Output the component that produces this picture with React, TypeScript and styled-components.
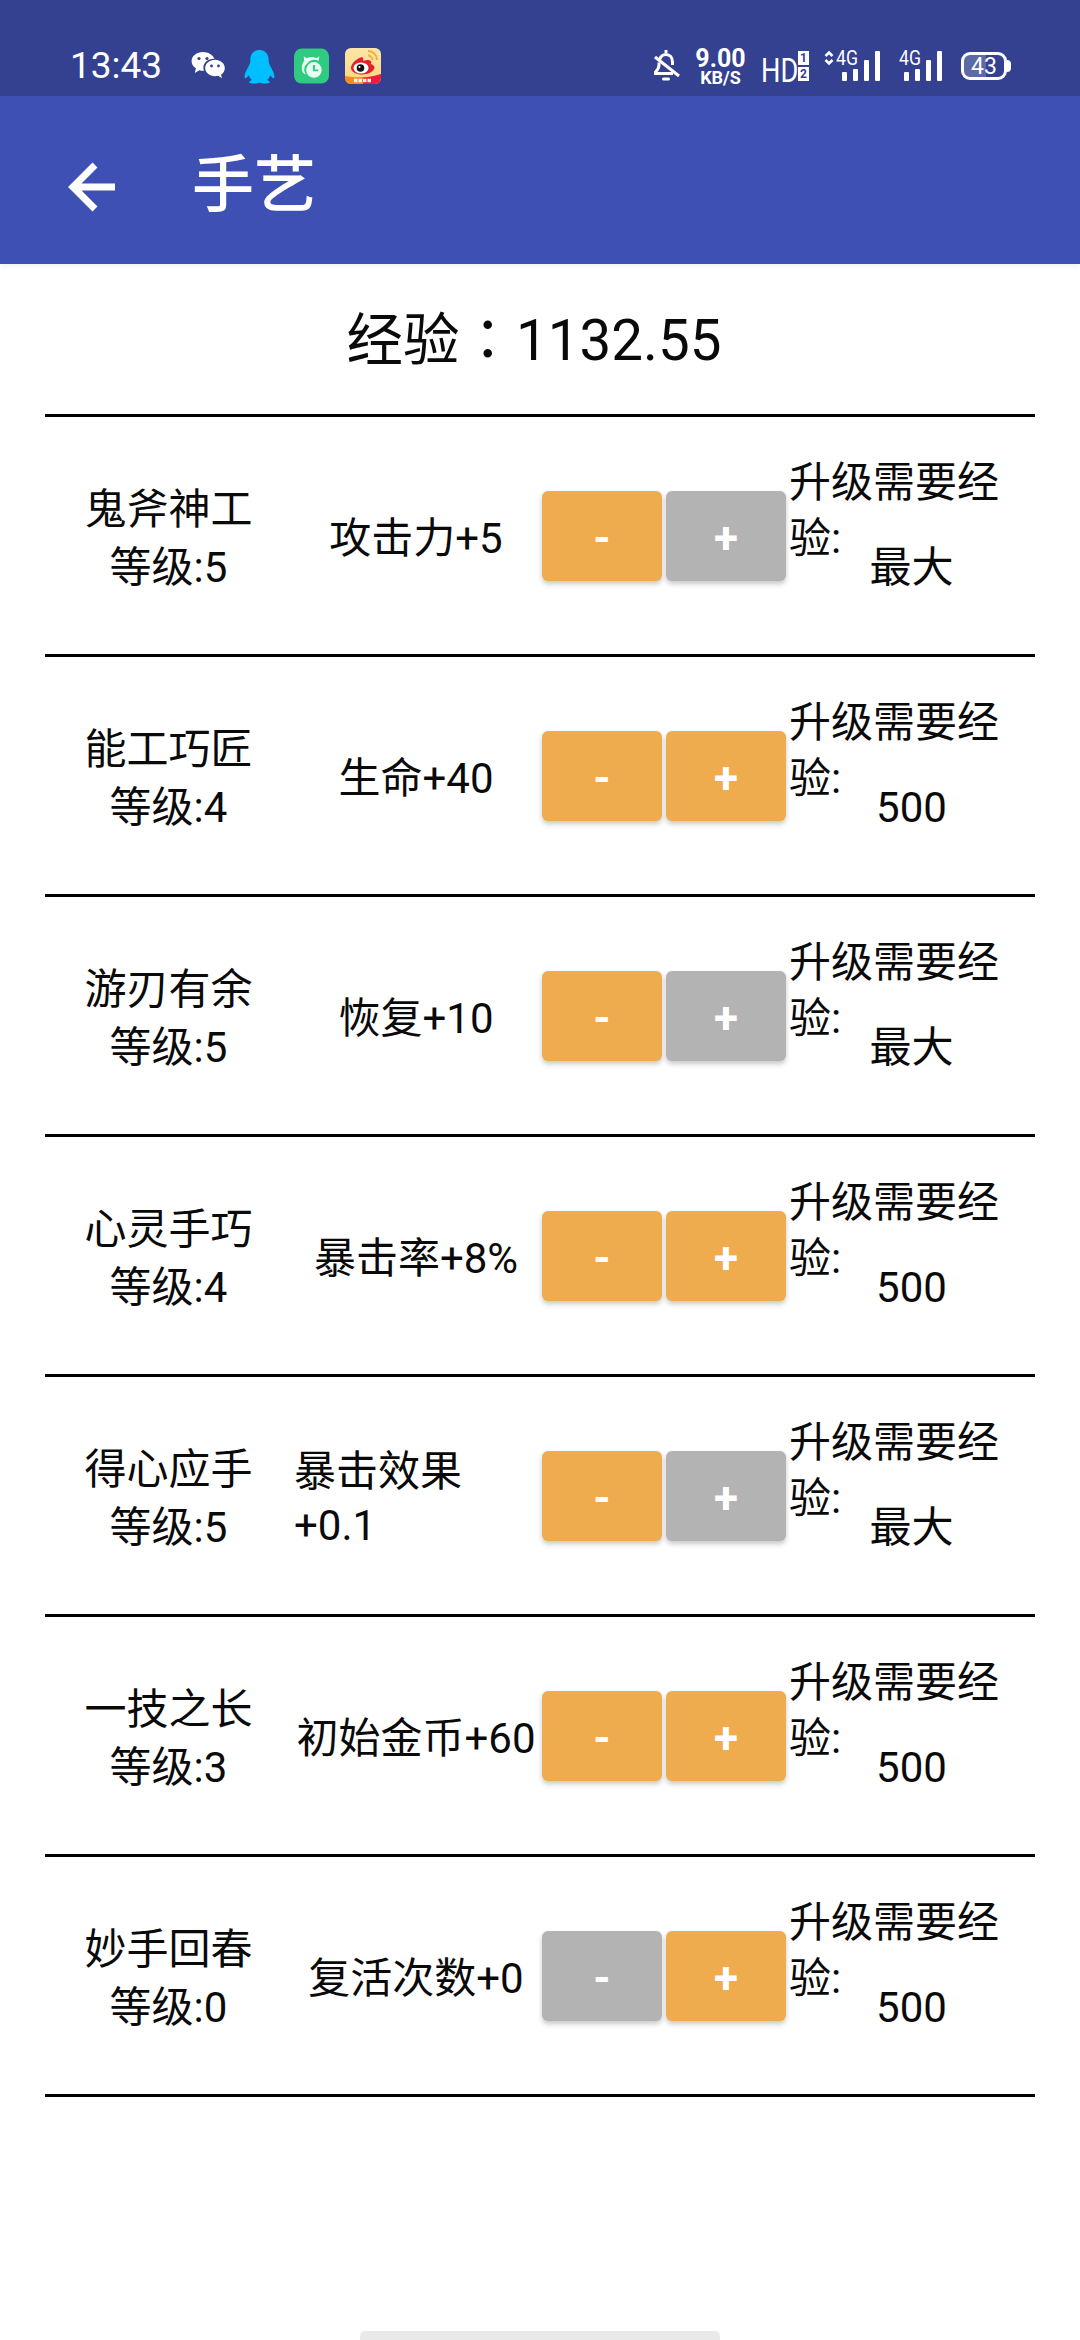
import React from 'react';
import styled, { createGlobalStyle } from 'styled-components';

const Global = createGlobalStyle`
  html, body { margin: 0; padding: 0; background: #fff; }
  body { font-family: Roboto, "Noto Sans CJK SC", sans-serif; color: #0a0a0a; }
`;

const Page = styled.div`
  position: relative;
  width: 1080px;
  height: 2340px;
  overflow: hidden;
  background: #fff;
`;

const StatusBar = styled.div`
  height: 96px;
  background: #334190;
  color: #fff;
  display: flex;
  align-items: flex-start;
  box-sizing: border-box;
  padding: 48px 0 0 70px;
`;

const Clock = styled.span`
  font-family: Roboto, sans-serif;
  font-weight: 400;
  font-size: 37px;
  line-height: 36px;
  width: 121px;
`;

const NotifIcons = styled.div`
  display: flex;
  align-items: center;
  gap: 19px;
  height: 36px;
`;

const WeiboMark = styled.svg`
  margin-left: -3px;
`;

const StatusRight = styled.div`
  margin-left: auto;
  margin-right: 73px;
  display: flex;
  align-items: flex-start;
  height: 40px;
`;

const Speed = styled.div`
  display: flex;
  flex-direction: column;
  align-items: center;
  width: 49px;
  margin: 0 16px 0 15px;
  font-family: Roboto, sans-serif;
  font-weight: 700;
`;

const SpeedValue = styled.span`
  font-size: 25px;
  line-height: 22px;
`;

const SpeedUnit = styled.span`
  font-size: 18px;
  line-height: 16px;
`;

const Hd = styled.span`
  display: block;
  width: 37px;
  font-family: Roboto, sans-serif;
  font-weight: 400;
  font-size: 34px;
  line-height: 34px;
  margin-top: 5px;
  white-space: nowrap;
  transform: scaleX(0.8);
  transform-origin: left center;
`;

const SimStack = styled.div`
  display: flex;
  flex-direction: column;
  gap: 2px;
  margin: 3px 15px 0 0;
`;

const SimBadge = styled.span`
  width: 11px;
  height: 14px;
  background: #fff;
  color: #334190;
  font-size: 12px;
  font-weight: 700;
  line-height: 14px;
  text-align: center;
`;

const Signal = styled.div<{ $wide?: boolean }>`
  position: relative;
  width: ${(p) => (p.$wide ? 56 : 43)}px;
  height: 33px;
  margin: 0 19px 0 0;
  display: flex;
  align-items: flex-end;
  justify-content: flex-end;
  gap: 6px;
`;

const Bar = styled.i<{ $h: number }>`
  display: block;
  width: 5px;
  height: ${(p) => p.$h}px;
  background: #fff;
  border-radius: 1px;
`;

const NetLabel = styled.span<{ $wide?: boolean }>`
  position: absolute;
  top: 0;
  left: ${(p) => (p.$wide ? 12 : 0)}px;
  font-family: Roboto, sans-serif;
  font-size: 21px;
  line-height: 20px;
  transform: scaleX(0.84);
  transform-origin: left center;
`;

const UpDown = styled.svg`
  position: absolute;
  left: 0;
  top: 2px;
`;

const Battery = styled.div`
  position: relative;
  width: 46px;
  height: 28px;
  margin-top: 4px;
  box-sizing: border-box;
  border: 3px solid #fff;
  border-radius: 9px;
  display: flex;
  align-items: center;
  justify-content: center;
  font-family: Roboto, sans-serif;
  font-size: 23px;
  font-weight: 400;
  background: linear-gradient(90deg, #5c6aa8 0 54%, transparent 54%);

  &::after {
    content: '';
    position: absolute;
    right: -7px;
    top: 5px;
    width: 4px;
    height: 12px;
    background: #fff;
    border-radius: 0 4px 4px 0;
  }
`;

const Toolbar = styled.div`
  position: relative;
  height: 168px;
  background: #3e50b4;
  color: #fff;
  display: flex;
  align-items: center;
  padding: 12px 0 0 60px;
  box-sizing: border-box;
  box-shadow: 0 3px 5px rgba(0, 0, 0, 0.05);
`;

const BackIcon = styled.svg`
  width: 60px;
  height: 60px;
  margin-right: 72px;
`;

const ToolbarTitle = styled.h1`
  margin: 0;
  font-size: 62px;
  font-weight: 500;
  line-height: 70px;
`;

const Content = styled.div`
  margin: 0 45px;
`;

const Experience = styled.div`
  height: 142px;
  padding: 0 12px 8px 0;
  display: flex;
  align-items: center;
  justify-content: center;
  font-family: Roboto, "Noto Sans CJK TC", sans-serif;
  font-size: 56.5px;
  border-bottom: 3px solid #000;
`;

const Row = styled.div`
  height: 237px;
  border-bottom: 3px solid #000;
  display: flex;
  align-items: center;
  font-size: 42px;
`;

const NameCell = styled.div`
  width: 247px;
  padding-top: 6px;
  text-align: center;
  line-height: 58px;
  flex: none;
`;

const EffectCell = styled.div`
  width: 248px;
  padding: 6px 2px 0;
  box-sizing: border-box;
  flex: none;
  text-align: center;
  line-height: 56px;
`;

const EffectWrapped = styled(EffectCell)`
  text-align: left;
  line-height: 54px;
`;

const Buttons = styled.div`
  display: flex;
  gap: 4px;
  margin-left: 2px;
  flex: none;
`;

const StepButton = styled.button<{ $on: boolean }>`
  width: 120px;
  height: 90px;
  padding: 5px 0 0;
  border: 0;
  border-radius: 6px;
  background: ${(p) => (p.$on ? '#efac4e' : '#b3b3b3')};
  color: #fff;
  font-family: Roboto, sans-serif;
  font-size: 44px;
  font-weight: 700;
  line-height: 1;
  box-shadow: 0 3px 5px rgba(0, 0, 0, 0.22);
`;

const NeedCell = styled.div`
  width: 245px;
  margin-left: 3px;
  padding-bottom: 20px;
  flex: none;
  display: flex;
  flex-direction: column;
  line-height: 56px;
`;

const NeedLabel = styled.div`
  width: 215px;
`;

const NeedValue = styled.div`
  text-align: center;
  margin-top: -27px;
`;

const HomeBar = styled.div`
  position: absolute;
  left: 360px;
  bottom: 0;
  width: 360px;
  height: 9px;
  background: #e9e9e9;
  border-radius: 5px 5px 0 0;
`;

const skills = [
  { name: '鬼斧神工', level: 5, effect: '攻击力+5', minus: true, plus: false, need: '最大' },
  { name: '能工巧匠', level: 4, effect: '生命+40', minus: true, plus: true, need: '500' },
  { name: '游刃有余', level: 5, effect: '恢复+10', minus: true, plus: false, need: '最大' },
  { name: '心灵手巧', level: 4, effect: '暴击率+8%', minus: true, plus: true, need: '500' },
  { name: '得心应手', level: 5, effect: '暴击效果+0.1', minus: true, plus: false, need: '最大', wrap: true },
  { name: '一技之长', level: 3, effect: '初始金币+60', minus: true, plus: true, need: '500' },
  { name: '妙手回春', level: 0, effect: '复活次数+0', minus: false, plus: true, need: '500' },
];

const WeChat = () => (
  <svg width="34" height="30" viewBox="0 0 34 30">
    <path fill="#fff" d="M12 1C5.600 1 .6 5 .6 10.200c0 3 1.700 5.400 4.300 7.100L3.800 22l4.600-2.800c1.300.4 2.600.6 4 .6h.6c-.4-1-.6-2-.6-3.100 0-5 4.600-8.900 10.400-8.900h.7C21.800 3.900 17.300 1 12 1z" />
    <path fill="#fff" d="M33.800 17c0-4.600-4.400-8.200-9.800-8.200s-9.800 3.600-9.800 8.200 4.400 8.200 9.800 8.200c1.100 0 2.200-.2 3.200-.5l3.800 2.500-1-3.500c2.500-1.500 3.800-3.800 3.800-6.700z" />
    <circle cx="8" cy="7.500" r="1.600" fill="#334190" />
    <circle cx="16" cy="7.500" r="1.600" fill="#334190" />
    <circle cx="20.500" cy="15" r="1.400" fill="#334190" />
    <circle cx="27.500" cy="15" r="1.400" fill="#334190" />
  </svg>
);

const Penguin = () => (
  <svg width="31" height="35" viewBox="0 0 31 35">
    <path fill="#00bfff" d="M15.500 1c-6.200 0-9.200 4.600-9.200 10 0 1.400.1 2.500-.5 3.800C4 19 .5 23.500.6 28c.1 1.400.9 1.500 1.900.7.800-.7 1.600-1.500 2.400-2.500.5 2 1.500 3.600 3 4.900-1.500.6-2.600 1.200-2.600 2.100 0 1 2.200 1.300 4.700 1.300 2.500 0 4.300-.4 5.500-1 1.200.6 3 1 5.500 1s4.700-.3 4.700-1.300c0-.9-1.100-1.500-2.600-2.100 1.500-1.300 2.500-2.900 3-4.900.8 1 1.600 1.800 2.400 2.500 1 .8 1.800.7 1.900-.7.100-4.500-3.400-9-5.200-13.200-.6-1.300-.5-2.400-.5-3.800 0-5.400-3-10-9.200-10z" />
  </svg>
);

const GreenApp = () => (
  <svg width="35" height="36" viewBox="0 0 36 36">
    <rect width="36" height="36" rx="8" fill="#2ecb80" />
    <path fill="#e8fff4" d="M10 8l3 2c1.500-.8 3.200-1.200 5-1.200s3.500.4 5 1.200l3-2-.6 4.500c-2-.8-4.200-1.100-6.400-.8-2.500.4-4 1.400-4.500 3-2.500 1.500-4 4-4 7 0 2 .7 3.800 1.800 5.300C9 25.600 8 23 8 20c0-3 1-5.500 2.400-7.500z" />
    <circle cx="20.500" cy="22" r="8" fill="#e8fff4" />
    <path d="M20.500 17V22.500H25" stroke="#2ecb80" strokeWidth="2" fill="none" />
  </svg>
);

const Weibo = () => (
  <WeiboMark width="36" height="36" viewBox="0 0 36 36">
    <defs>
      <linearGradient id="wb" x1="0" y1="0" x2="0" y2="1">
        <stop offset="0" stopColor="#fde6a8" />
        <stop offset="1" stopColor="#fdd580" />
      </linearGradient>
      <clipPath id="wbc"><rect width="36" height="36" rx="6" /></clipPath>
    </defs>
    <g clipPath="url(#wbc)">
      <rect width="36" height="36" fill="url(#wb)" />
      <path fill="#f98a1e" d="M0 28c10 2 24 2 36-2v10H0z" />
      <path fill="#ee1c3a" d="M18 29.500c7 0 13-2 18-3.500v10H18z" />
    </g>
    <path d="M9 32.500H27" stroke="#fff" strokeWidth="3.500" strokeDasharray="3.500 1" opacity="0.9" />
    <path fill="none" stroke="#f2a83b" strokeWidth="1.800" d="M23 3c5 0 9 4 9 9M23 7.500c2.500 0 4.500 2 4.500 4.500" />
    <path fill="#e5202e" d="M6 20c0-4 5-9 9.500-10.500 2.500-.8 3.500 1 2.500 3.500 3.500-1.500 7-1.500 8 .5.500 1 .2 2-.3 2.500 2.300.6 3.800 2 3.800 3.500 0 3.500-6 7-12 7S6 24 6 20z" />
    <ellipse cx="16" cy="20" rx="7.500" ry="5.500" fill="#fff" />
    <circle cx="15.500" cy="20" r="3.800" fill="#111" />
    <circle cx="14.500" cy="19" r="1" fill="#fff" />
  </WeiboMark>
);

const BellOff = () => (
  <svg width="28" height="34" viewBox="0 0 28 34" fill="none" stroke="#fff" strokeWidth="3">
    <path d="M13 2v3" />
    <path d="M6.500 12c1-3.500 3.500-5.500 6.500-5.500 3.800 0 6.500 3 6.500 7.500v3" />
    <path d="M6 14.500V17c0 3-1.500 5-3.500 7v1.500H20" />
    <path d="M2 9l24 19" />
    <path d="M10.500 31h5" strokeLinecap="round" />
  </svg>
);

const Bars = () => (
  <>
    <Bar $h={9} />
    <Bar $h={12} />
    <Bar $h={21} />
    <Bar $h={30} />
  </>
);

export default function App() {
  return (
    <Page>
      <Global />
      <StatusBar>
        <Clock>13:43</Clock>
        <NotifIcons>
          <WeChat />
          <Penguin />
          <GreenApp />
          <Weibo />
        </NotifIcons>
        <StatusRight>
          <BellOff />
          <Speed>
            <SpeedValue>9.00</SpeedValue>
            <SpeedUnit>KB/S</SpeedUnit>
          </Speed>
          <Hd>HD</Hd>
          <SimStack>
            <SimBadge>1</SimBadge>
            <SimBadge>2</SimBadge>
          </SimStack>
          <Signal $wide>
            <UpDown width="10" height="16" viewBox="0 0 10 16" fill="none" stroke="#fff" strokeWidth="2.600">
              <path d="M1.500 6L5 2.500 8.500 6M1.500 10L5 13.500 8.500 10" />
            </UpDown>
            <NetLabel $wide>4G</NetLabel>
            <Bars />
          </Signal>
          <Signal>
            <NetLabel>4G</NetLabel>
            <Bars />
          </Signal>
          <Battery>43</Battery>
        </StatusRight>
      </StatusBar>
      <Toolbar>
        <BackIcon viewBox="0 0 60 60" fill="none" stroke="#fff" strokeWidth="7">
          <path d="M55 31H13M35 9L13 31l22 22" />
        </BackIcon>
        <ToolbarTitle>手艺</ToolbarTitle>
      </Toolbar>
      <Content>
        <Experience>经验：1132.55</Experience>
        {skills.map((s) => {
          const Effect = s.wrap ? EffectWrapped : EffectCell;
          return (
            <Row key={s.name}>
              <NameCell>
                {s.name}
                <br />
                等级:{s.level}
              </NameCell>
              <Effect>{s.effect}</Effect>
              <Buttons>
                <StepButton $on={s.minus}>-</StepButton>
                <StepButton $on={s.plus}>+</StepButton>
              </Buttons>
              <NeedCell>
                <NeedLabel>升级需要经验:</NeedLabel>
                <NeedValue>{s.need}</NeedValue>
              </NeedCell>
            </Row>
          );
        })}
      </Content>
      <HomeBar />
    </Page>
  );
}
